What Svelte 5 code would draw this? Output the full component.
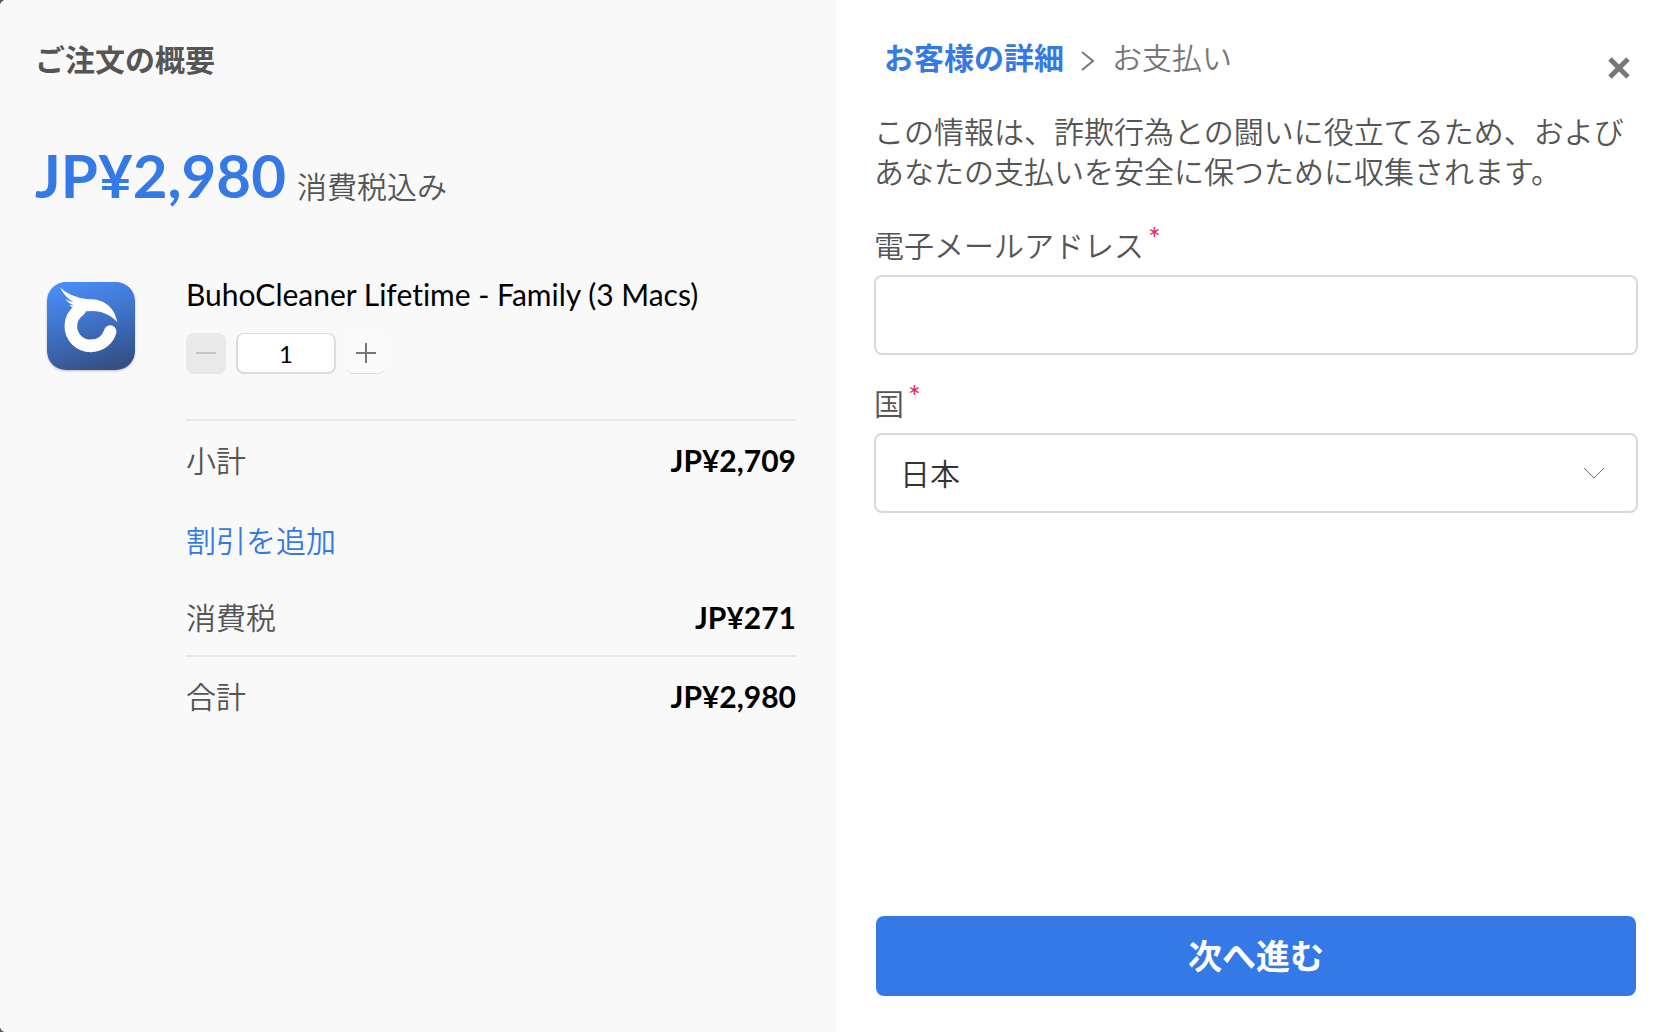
<script>
  const unitPrice = 2980;
  const unitTax = 271;

  let quantity = $state(1);
  let email = $state('');
  let country = $state('JP');

  let total = $derived(unitPrice * quantity);
  let tax = $derived(unitTax * quantity);
  let subtotal = $derived(total - tax);

  const countries = [
    { code: 'JP', name: '日本' },
    { code: 'US', name: 'アメリカ合衆国' },
    { code: 'GB', name: 'イギリス' },
  ];

  function format(amount) {
    return 'JP¥' + amount.toLocaleString('en-US');
  }

  function handleSubmit(e) {
    e.preventDefault();
  }
</script>

<div class="checkout" lang="ja">
  <section class="summary">
    <h2 class="summary-title">ご注文の概要</h2>

    <p class="price">
      <strong class="price-amount">{format(total)}</strong>
      <span class="price-note">消費税込み</span>
    </p>

    <div class="item">
      <svg class="item-icon" viewBox="50 50 266 266" aria-hidden="true">
        <defs>
          <linearGradient id="icon-bg" x1="0.35" y1="0" x2="0.65" y2="1">
            <stop offset="0" stop-color="#4a8bf5" />
            <stop offset="0.45" stop-color="#3f72c8" />
            <stop offset="1" stop-color="#344f85" />
          </linearGradient>
        </defs>
        <rect x="50" y="50" width="266" height="266" rx="58" fill="url(#icon-bg)" />
        <path
          d="M241 200 C233 226 210 243 182 243 C149 243 122 217 122 184 C122 162 133 145 149 134"
          fill="none" stroke="#fff" stroke-width="38" stroke-linecap="round"
        />
        <path
          d="M90 67 C103 80 122 91 150 98 C165 101 174 102 187 102 C225 104 257 130 262 172 C246 152 218 138 185 138 C158 141 132 135 115 117 C121 121 127 122 132 121 C120 117 111 110 105 101 C113 107 121 110 130 110 C116 104 101 90 90 67 Z"
          fill="#fff"
        />
      </svg>

      <div class="item-body">
        <h3 class="item-name">BuhoCleaner Lifetime - Family (3 Macs)</h3>

        <div class="stepper">
          <button
            class="step" type="button" aria-label="数量を減らす"
            disabled={quantity <= 1} onclick={() => quantity -= 1}
          >
            <svg viewBox="0 0 20 20"><path d="M0 10H20" /></svg>
          </button>
          <input class="quantity" type="text" inputmode="numeric" aria-label="数量" bind:value={quantity} />
          <button class="step" type="button" aria-label="数量を増やす" onclick={() => quantity += 1}>
            <svg viewBox="0 0 20 20"><path d="M0 10H20M10 0V20" /></svg>
          </button>
        </div>

        <dl class="totals">
          <div class="row ruled">
            <dt>小計</dt>
            <dd>{format(subtotal)}</dd>
          </div>
          <div class="row">
            <dt><a class="discount" href="#discount">割引を追加</a></dt>
          </div>
          <div class="row tax">
            <dt>消費税</dt>
            <dd>{format(tax)}</dd>
          </div>
          <div class="row ruled">
            <dt>合計</dt>
            <dd>{format(total)}</dd>
          </div>
        </dl>
      </div>
    </div>
  </section>

  <form class="details" onsubmit={handleSubmit}>
    <header class="details-header">
      <ol class="steps">
        <li class="current" aria-current="step">お客様の詳細</li>
        <li class="separator" aria-hidden="true">
          <svg viewBox="0 0 14 20"><path d="M1 1L12 10L1 19" /></svg>
        </li>
        <li>お支払い</li>
      </ol>
      <button class="close" type="button" aria-label="閉じる">
        <svg viewBox="0 0 22 22"><path d="M2 2L20 20M20 2L2 20" /></svg>
      </button>
    </header>

    <p class="intro">この情報は、詐欺行為との闘いに役立てるため、およびあなたの支払いを安全に保つために収集されます。</p>

    <div class="field">
      <label for="email">電子メールアドレス<span class="required">*</span></label>
      <input id="email" class="control" type="email" required bind:value={email} />
    </div>

    <div class="field">
      <label for="country">国<span class="required">*</span></label>
      <div class="select">
        <select id="country" class="control" required bind:value={country}>
          {#each countries as { code, name }}
            <option value={code}>{name}</option>
          {/each}
        </select>
        <svg class="chevron" viewBox="0 0 20 12" aria-hidden="true"><path d="M0 1L10 11L20 1" /></svg>
      </div>
    </div>

    <button class="submit" type="submit">次へ進む</button>
  </form>
</div>

<style>
  :global(body) { margin: 0; background: #555; }

  .checkout {
    display: grid; grid-template-columns: 1fr 1fr;
    min-height: 100vh;
    border-radius: 6px 0 0 6px; overflow: hidden;
    background: #fff; color: #555;
    font-family: Lato, 'Noto Sans CJK JP', sans-serif;
    font-size: 30px; font-weight: 350; line-height: 40px;
    font-variant-ligatures: none;
  }
  .checkout * { box-sizing: border-box; }
  h2, h3, p, dl, dd, ol { margin: 0; padding: 0; }
  button, input, select { font: inherit; }
  svg { display: block; fill: none; stroke: currentColor; }

  .summary {
    margin-right: -2px; padding: 39px 40px 40px 35px;
    background: #f9f9f9;
  }
  .summary-title { font-size: 30px; font-weight: 600; line-height: 40px; }

  .price {
    display: flex; align-items: baseline; gap: 11px;
    margin-top: 56px;
    line-height: 80px;
  }
  .price-amount { color: #3579e6; font-size: 60px; font-weight: 700; }

  .item { display: flex; margin-top: 48px; }
  .item-icon {
    flex: none; width: 88px; height: 88px;
    margin: 8px 51px 0 12px;
    stroke: none;
    filter: drop-shadow(0 1px 1px rgba(0, 0, 0, 0.25));
  }
  .item-body { flex: 1; }
  .item-name { color: #000; font-size: 30px; font-weight: 400; line-height: 40px; }

  .stepper { display: flex; gap: 10px; margin-top: 19px; }
  .step {
    display: flex; align-items: center; justify-content: center;
    width: 40px; height: 41px; padding: 0;
    border: none; border-bottom: 1px solid #ddd; border-radius: 8px;
    background: #fafafa; color: #777; cursor: pointer;
  }
  .step svg { width: 20px; height: 20px; stroke-width: 2; }
  .step:disabled { background: #e9e9e9; border-color: #e4e4e4; color: #c4c4c4; cursor: default; }
  .quantity {
    width: 100px; height: 41px; padding: 0;
    border: 2px solid #dcdcdc; border-top-width: 1px; border-radius: 8px;
    background: #fff; color: #000;
    font-size: 24px; font-weight: 400; text-align: center;
  }

  .totals { margin-top: 45px; }
  .row {
    display: flex; align-items: center; justify-content: space-between;
    height: 80px; padding-bottom: 2px;
  }
  .row.ruled { height: 82px; border-top: 2px solid #e8e8e8; }
  .row.tax { height: 74px; }
  .row dd { color: #000; font-weight: 700; }
  .discount { color: #3579e6; text-decoration: none; }

  .details {
    display: flex; flex-direction: column;
    padding: 37px 30px 36px 40px;
  }
  .details-header {
    display: flex; align-items: flex-start; justify-content: space-between;
    padding: 0 8px 0 10px;
  }
  .steps { display: flex; align-items: center; list-style: none; color: #777; }
  .steps .current { color: #3579e6; font-weight: 600; }
  .separator { padding: 7px 17px 0; }
  .separator svg { width: 14px; height: 20px; stroke-width: 2; }
  .close {
    margin-top: 20px; padding: 0;
    border: none; background: none; color: #777; cursor: pointer;
  }
  .close svg { width: 22px; height: 22px; stroke-width: 5; }

  .intro { margin-top: 32px; }

  .field { display: flex; flex-direction: column; margin-top: 34px; }
  .field + .field { margin-top: 28px; }
  label { display: flex; line-height: 40px; }
  .required {
    margin-left: 4px;
    color: #e0284f;
    font-size: 30px; font-weight: 400; line-height: 26px;
  }
  .control {
    width: 100%; height: 80px; padding: 0 24px; margin-top: 10px;
    border: 2px solid #d9d9d9; border-radius: 8px;
    background: #fff; color: #333; outline: none;
  }
  .control:focus { border-color: #3579e6; }
  .select { position: relative; }
  select.control { appearance: none; }
  .chevron {
    position: absolute; right: 34px; bottom: 34px;
    width: 20px; height: 12px;
    color: #777; stroke-width: 1; pointer-events: none;
  }

  .submit {
    height: 80px; margin: auto 2px 0;
    border: none; border-radius: 8px;
    background: #3579e6; color: #fff;
    font-size: 34px; font-weight: 600; cursor: pointer;
  }
</style>
